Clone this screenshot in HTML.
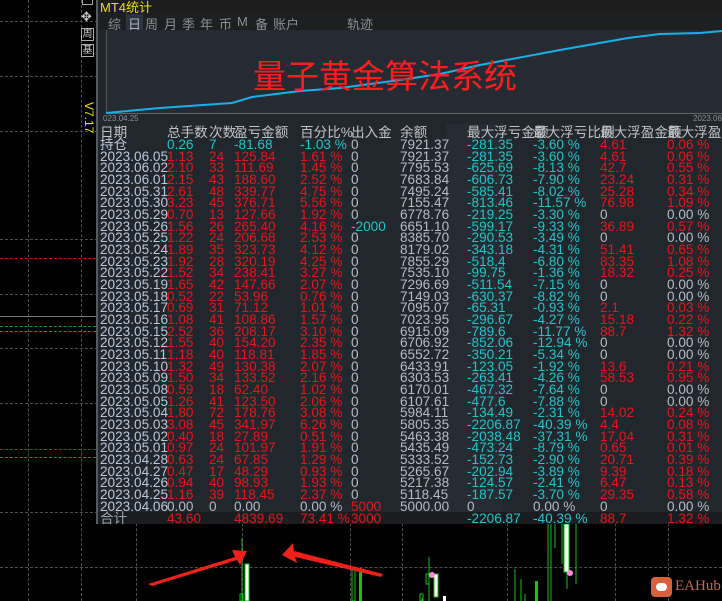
<!DOCTYPE html>
<html><head><meta charset="utf-8"><style>
*{margin:0;padding:0;box-sizing:border-box}
body{width:722px;height:601px;background:#000;position:relative;overflow:hidden;font-family:"Liberation Sans","Noto Sans CJK SC",sans-serif}
.a{position:absolute}
.hd{position:absolute;left:0;width:722px;border-top:1px dashed #4a4f57}
.vd{position:absolute;top:0;height:601px;border-left:1px dashed #4a4f57}
#panel{position:absolute;left:96px;top:0;width:626px;height:524px;background:#22262d;border-left:2px solid #555a62;border-bottom:1px solid #6a6f77}
.row{position:absolute;left:100px;height:12px;font-size:13.6px;line-height:12px;white-space:nowrap}
.row span{position:absolute;top:0}
.d{color:#b9c8dc;left:0}
.r{color:#e8161c}.c{color:#1ec6c8}.g{color:#b4bcc6}
.c1{left:67px}.c2{left:109px}.c3{left:134px}.c4{left:200px}.c5{left:251px}.c6{left:300px}.c7{left:367px}.c8{left:433px}.c9{left:500px}.c10{left:567px}
.tab{position:absolute;top:14px;font-size:13px;color:#8a9098}
</style></head><body>
<div class="hd" style="top:21px"></div><div class="hd" style="top:76px"></div><div class="hd" style="top:131px"></div>
<div class="hd" style="top:239px"></div><div class="hd" style="top:294px"></div><div class="hd" style="top:348px"></div>
<div class="hd" style="top:403px"></div><div class="hd" style="top:512px"></div><div class="hd" style="top:567px"></div>
<div class="vd" style="left:28px"></div><div class="vd" style="left:81px"></div><div class="vd" style="left:136px"></div>
<div class="vd" style="left:242px"></div><div class="vd" style="left:350px"></div><div class="vd" style="left:402px"></div>
<div class="vd" style="left:507px"></div><div class="vd" style="left:615px"></div><div class="vd" style="left:668px"></div>
<div class="a" style="left:0;top:258px;width:96px;border-top:1px dashed #d01010"></div>
<div class="a" style="left:0;top:316px;width:96px;border-top:1px solid #777"></div>
<div class="a" style="left:0;top:326px;width:96px;border-top:1px dashed #1a9a1a"></div>
<div class="a" style="left:0;top:331px;width:96px;border-top:1px dashed #1a9a1a"></div>
<div class="a" style="left:0;top:449px;width:96px;border-top:1px dashed #d01010"></div>
<div class="a" style="left:0;top:457px;width:96px;border-top:1px dashed #1a9a1a"></div>
<div class="a" style="left:82px;top:0;width:11px;height:5px;border:1px solid #aaa;border-top:none"></div>
<div class="a" style="left:81px;top:9px;color:#ccc;font-size:13px">✥</div>
<div class="a" style="left:81px;top:28px;width:13px;height:13px;border:1px solid #aaa;color:#ccc;font-size:10px;line-height:11px;text-align:center">周</div>
<div class="a" style="left:81px;top:44px;width:13px;height:13px;border:1px solid #aaa;color:#ccc;font-size:10px;line-height:11px;text-align:center">基</div>
<div class="a" style="top:102px;color:#e8e000;font-size:12px;transform:rotate(90deg);transform-origin:0 0;left:96px;white-space:nowrap">V7.17</div>
<div id="panel"></div>
<div class="a" style="left:98px;top:0;width:624px;height:13px;background:#1d1d1d"></div>
<div class="a" style="left:100px;top:-3px;color:#e8e000;font-size:13px">MT4统计</div>
<div class="a" style="left:98px;top:13px;width:624px;height:17px;background:#1e1f21"></div>
<span class="tab" style="left:108px">综</span>
<span class="tab" style="left:126px;color:#aab4c4;background:#2d3440;padding:0 2px">日</span>
<span class="tab" style="left:145px">周</span><span class="tab" style="left:164px">月</span><span class="tab" style="left:182px">季</span>
<span class="tab" style="left:200px">年</span><span class="tab" style="left:219px">币</span><span class="tab" style="left:237px">M</span>
<span class="tab" style="left:255px">备</span><span class="tab" style="left:273px">账户</span><span class="tab" style="left:347px">轨迹</span>
<div class="a" style="left:106px;top:30px;width:616px;height:84px;background:#262b33;border-left:1px solid #555;border-bottom:1px solid #666"></div>
<svg class="a" style="left:0;top:0" width="722" height="130">
<polyline fill="none" stroke="#19b0e8" stroke-width="2" points="106,113 160,108 232,103 252,97 300,91 340,88 400,80 440,74 480,65 560,50 628,38 660,34 700,33 722,31"/>
</svg>
<div class="a" style="left:103px;top:114px;font-size:8px;color:#8a9098">023.04.25</div>
<div class="a" style="left:693px;top:114px;font-size:8px;color:#8a9098">2023.06.</div>
<div class="a" style="left:253px;top:52px;font-size:33px;color:#ff1c1c;font-family:'Noto Sans CJK SC',sans-serif;line-height:44px">量子黄金算法系统</div>
<div class="a" style="left:446px;top:124px;width:56px;height:388px;background:#272c34"></div>
<div class="row" style="top:127px;color:#c0c4c8"><span class="d" style="color:#c0c4c8">日期</span><span class="c1">总手数</span><span class="c2">次数</span><span class="c3">盈亏金额</span><span class="c4">百分比%</span><span class="c5">出入金</span><span class="c6">余额</span><span class="c7">最大浮亏金额</span><span class="c8">最大浮亏比例</span><span class="c9">最大浮盈金额</span><span class="c10">最大浮盈比</span></div>
<div class="row" style="top:139px"><span class="d">持仓</span><span class="c1 c">0.26</span><span class="c2 c">7</span><span class="c3 c">-81.68</span><span class="c4 c">-1.03 %</span><span class="c5 g">0</span><span class="c6 g">7921.37</span><span class="c7 c">-281.35</span><span class="c8 c">-3.60 %</span><span class="c9 r">4.61</span><span class="c10 r">0.06 %</span></div>
<div class="row" style="top:151px"><span class="d">2023.06.05</span><span class="c1 r">1.13</span><span class="c2 r">24</span><span class="c3 r">125.84</span><span class="c4 r">1.61 %</span><span class="c5 g">0</span><span class="c6 g">7921.37</span><span class="c7 c">-281.35</span><span class="c8 c">-3.60 %</span><span class="c9 r">4.61</span><span class="c10 r">0.06 %</span></div>
<div class="row" style="top:162px"><span class="d">2023.06.02</span><span class="c1 r">2.10</span><span class="c2 r">33</span><span class="c3 r">111.69</span><span class="c4 r">1.45 %</span><span class="c5 g">0</span><span class="c6 g">7795.53</span><span class="c7 c">-625.69</span><span class="c8 c">-8.13 %</span><span class="c9 r">42.7</span><span class="c10 r">0.55 %</span></div>
<div class="row" style="top:174px"><span class="d">2023.06.01</span><span class="c1 r">2.15</span><span class="c2 r">43</span><span class="c3 r">188.60</span><span class="c4 r">2.52 %</span><span class="c5 g">0</span><span class="c6 g">7683.84</span><span class="c7 c">-606.73</span><span class="c8 c">-7.90 %</span><span class="c9 r">23.24</span><span class="c10 r">0.31 %</span></div>
<div class="row" style="top:186px"><span class="d">2023.05.31</span><span class="c1 r">2.61</span><span class="c2 r">48</span><span class="c3 r">339.77</span><span class="c4 r">4.75 %</span><span class="c5 g">0</span><span class="c6 g">7495.24</span><span class="c7 c">-585.41</span><span class="c8 c">-8.02 %</span><span class="c9 r">25.28</span><span class="c10 r">0.34 %</span></div>
<div class="row" style="top:197px"><span class="d">2023.05.30</span><span class="c1 r">3.23</span><span class="c2 r">45</span><span class="c3 r">376.71</span><span class="c4 r">5.56 %</span><span class="c5 g">0</span><span class="c6 g">7155.47</span><span class="c7 c">-813.46</span><span class="c8 c">-11.57 %</span><span class="c9 r">76.98</span><span class="c10 r">1.09 %</span></div>
<div class="row" style="top:209px"><span class="d">2023.05.29</span><span class="c1 r">0.70</span><span class="c2 r">13</span><span class="c3 r">127.66</span><span class="c4 r">1.92 %</span><span class="c5 g">0</span><span class="c6 g">6778.76</span><span class="c7 c">-219.25</span><span class="c8 c">-3.30 %</span><span class="c9 g">0</span><span class="c10 g">0.00 %</span></div>
<div class="row" style="top:221px"><span class="d">2023.05.26</span><span class="c1 r">1.56</span><span class="c2 r">26</span><span class="c3 r">265.40</span><span class="c4 r">4.16 %</span><span class="c5 c">-2000</span><span class="c6 g">6651.10</span><span class="c7 c">-599.17</span><span class="c8 c">-9.33 %</span><span class="c9 r">36.89</span><span class="c10 r">0.57 %</span></div>
<div class="row" style="top:232px"><span class="d">2023.05.25</span><span class="c1 r">1.22</span><span class="c2 r">24</span><span class="c3 r">206.68</span><span class="c4 r">2.53 %</span><span class="c5 g">0</span><span class="c6 g">8385.70</span><span class="c7 c">-290.53</span><span class="c8 c">-3.49 %</span><span class="c9 g">0</span><span class="c10 g">0.00 %</span></div>
<div class="row" style="top:244px"><span class="d">2023.05.24</span><span class="c1 r">1.89</span><span class="c2 r">35</span><span class="c3 r">323.73</span><span class="c4 r">4.12 %</span><span class="c5 g">0</span><span class="c6 g">8179.02</span><span class="c7 c">-343.18</span><span class="c8 c">-4.31 %</span><span class="c9 r">51.41</span><span class="c10 r">0.65 %</span></div>
<div class="row" style="top:256px"><span class="d">2023.05.23</span><span class="c1 r">1.92</span><span class="c2 r">28</span><span class="c3 r">320.19</span><span class="c4 r">4.25 %</span><span class="c5 g">0</span><span class="c6 g">7855.29</span><span class="c7 c">-518.4</span><span class="c8 c">-6.80 %</span><span class="c9 r">83.35</span><span class="c10 r">1.08 %</span></div>
<div class="row" style="top:267px"><span class="d">2023.05.22</span><span class="c1 r">1.52</span><span class="c2 r">34</span><span class="c3 r">238.41</span><span class="c4 r">3.27 %</span><span class="c5 g">0</span><span class="c6 g">7535.10</span><span class="c7 c">-99.75</span><span class="c8 c">-1.36 %</span><span class="c9 r">18.32</span><span class="c10 r">0.25 %</span></div>
<div class="row" style="top:279px"><span class="d">2023.05.19</span><span class="c1 r">1.65</span><span class="c2 r">42</span><span class="c3 r">147.66</span><span class="c4 r">2.07 %</span><span class="c5 g">0</span><span class="c6 g">7296.69</span><span class="c7 c">-511.54</span><span class="c8 c">-7.15 %</span><span class="c9 g">0</span><span class="c10 g">0.00 %</span></div>
<div class="row" style="top:291px"><span class="d">2023.05.18</span><span class="c1 r">0.52</span><span class="c2 r">22</span><span class="c3 r">53.96</span><span class="c4 r">0.76 %</span><span class="c5 g">0</span><span class="c6 g">7149.03</span><span class="c7 c">-630.37</span><span class="c8 c">-8.82 %</span><span class="c9 g">0</span><span class="c10 g">0.00 %</span></div>
<div class="row" style="top:302px"><span class="d">2023.05.17</span><span class="c1 r">0.69</span><span class="c2 r">31</span><span class="c3 r">71.12</span><span class="c4 r">1.01 %</span><span class="c5 g">0</span><span class="c6 g">7095.07</span><span class="c7 c">-65.31</span><span class="c8 c">-0.93 %</span><span class="c9 r">2.1</span><span class="c10 r">0.03 %</span></div>
<div class="row" style="top:314px"><span class="d">2023.05.16</span><span class="c1 r">1.08</span><span class="c2 r">41</span><span class="c3 r">108.86</span><span class="c4 r">1.57 %</span><span class="c5 g">0</span><span class="c6 g">7023.95</span><span class="c7 c">-296.67</span><span class="c8 c">-4.27 %</span><span class="c9 r">15.18</span><span class="c10 r">0.22 %</span></div>
<div class="row" style="top:326px"><span class="d">2023.05.15</span><span class="c1 r">2.52</span><span class="c2 r">36</span><span class="c3 r">208.17</span><span class="c4 r">3.10 %</span><span class="c5 g">0</span><span class="c6 g">6915.09</span><span class="c7 c">-789.6</span><span class="c8 c">-11.77 %</span><span class="c9 r">88.7</span><span class="c10 r">1.32 %</span></div>
<div class="row" style="top:337px"><span class="d">2023.05.12</span><span class="c1 r">1.55</span><span class="c2 r">40</span><span class="c3 r">154.20</span><span class="c4 r">2.35 %</span><span class="c5 g">0</span><span class="c6 g">6706.92</span><span class="c7 c">-852.06</span><span class="c8 c">-12.94 %</span><span class="c9 g">0</span><span class="c10 g">0.00 %</span></div>
<div class="row" style="top:349px"><span class="d">2023.05.11</span><span class="c1 r">1.18</span><span class="c2 r">40</span><span class="c3 r">118.81</span><span class="c4 r">1.85 %</span><span class="c5 g">0</span><span class="c6 g">6552.72</span><span class="c7 c">-350.21</span><span class="c8 c">-5.34 %</span><span class="c9 g">0</span><span class="c10 g">0.00 %</span></div>
<div class="row" style="top:361px"><span class="d">2023.05.10</span><span class="c1 r">1.32</span><span class="c2 r">49</span><span class="c3 r">130.38</span><span class="c4 r">2.07 %</span><span class="c5 g">0</span><span class="c6 g">6433.91</span><span class="c7 c">-123.05</span><span class="c8 c">-1.92 %</span><span class="c9 r">13.6</span><span class="c10 r">0.21 %</span></div>
<div class="row" style="top:372px"><span class="d">2023.05.09</span><span class="c1 r">1.50</span><span class="c2 r">34</span><span class="c3 r">133.52</span><span class="c4 r">2.16 %</span><span class="c5 g">0</span><span class="c6 g">6303.53</span><span class="c7 c">-263.41</span><span class="c8 c">-4.26 %</span><span class="c9 r">58.53</span><span class="c10 r">0.95 %</span></div>
<div class="row" style="top:384px"><span class="d">2023.05.08</span><span class="c1 r">0.59</span><span class="c2 r">18</span><span class="c3 r">62.40</span><span class="c4 r">1.02 %</span><span class="c5 g">0</span><span class="c6 g">6170.01</span><span class="c7 c">-467.32</span><span class="c8 c">-7.64 %</span><span class="c9 g">0</span><span class="c10 g">0.00 %</span></div>
<div class="row" style="top:396px"><span class="d">2023.05.05</span><span class="c1 r">1.26</span><span class="c2 r">41</span><span class="c3 r">123.50</span><span class="c4 r">2.06 %</span><span class="c5 g">0</span><span class="c6 g">6107.61</span><span class="c7 c">-477.6</span><span class="c8 c">-7.88 %</span><span class="c9 g">0</span><span class="c10 g">0.00 %</span></div>
<div class="row" style="top:407px"><span class="d">2023.05.04</span><span class="c1 r">1.80</span><span class="c2 r">72</span><span class="c3 r">178.76</span><span class="c4 r">3.08 %</span><span class="c5 g">0</span><span class="c6 g">5984.11</span><span class="c7 c">-134.49</span><span class="c8 c">-2.31 %</span><span class="c9 r">14.02</span><span class="c10 r">0.24 %</span></div>
<div class="row" style="top:419px"><span class="d">2023.05.03</span><span class="c1 r">3.08</span><span class="c2 r">45</span><span class="c3 r">341.97</span><span class="c4 r">6.26 %</span><span class="c5 g">0</span><span class="c6 g">5805.35</span><span class="c7 c">-2206.87</span><span class="c8 c">-40.39 %</span><span class="c9 r">4.4</span><span class="c10 r">0.08 %</span></div>
<div class="row" style="top:431px"><span class="d">2023.05.02</span><span class="c1 r">0.40</span><span class="c2 r">18</span><span class="c3 r">27.89</span><span class="c4 r">0.51 %</span><span class="c5 g">0</span><span class="c6 g">5463.38</span><span class="c7 c">-2038.48</span><span class="c8 c">-37.31 %</span><span class="c9 r">17.04</span><span class="c10 r">0.31 %</span></div>
<div class="row" style="top:442px"><span class="d">2023.05.01</span><span class="c1 r">0.97</span><span class="c2 r">24</span><span class="c3 r">101.97</span><span class="c4 r">1.91 %</span><span class="c5 g">0</span><span class="c6 g">5435.49</span><span class="c7 c">-473.24</span><span class="c8 c">-8.79 %</span><span class="c9 r">0.65</span><span class="c10 r">0.01 %</span></div>
<div class="row" style="top:454px"><span class="d">2023.04.28</span><span class="c1 r">0.63</span><span class="c2 r">24</span><span class="c3 r">67.85</span><span class="c4 r">1.29 %</span><span class="c5 g">0</span><span class="c6 g">5333.52</span><span class="c7 c">-152.73</span><span class="c8 c">-2.90 %</span><span class="c9 r">20.71</span><span class="c10 r">0.39 %</span></div>
<div class="row" style="top:466px"><span class="d">2023.04.27</span><span class="c1 r">0.47</span><span class="c2 r">17</span><span class="c3 r">48.29</span><span class="c4 r">0.93 %</span><span class="c5 g">0</span><span class="c6 g">5265.67</span><span class="c7 c">-202.94</span><span class="c8 c">-3.89 %</span><span class="c9 r">9.39</span><span class="c10 r">0.18 %</span></div>
<div class="row" style="top:477px"><span class="d">2023.04.26</span><span class="c1 r">0.94</span><span class="c2 r">40</span><span class="c3 r">98.93</span><span class="c4 r">1.93 %</span><span class="c5 g">0</span><span class="c6 g">5217.38</span><span class="c7 c">-124.57</span><span class="c8 c">-2.41 %</span><span class="c9 r">6.47</span><span class="c10 r">0.13 %</span></div>
<div class="row" style="top:489px"><span class="d">2023.04.25</span><span class="c1 r">1.16</span><span class="c2 r">39</span><span class="c3 r">118.45</span><span class="c4 r">2.37 %</span><span class="c5 g">0</span><span class="c6 g">5118.45</span><span class="c7 c">-187.57</span><span class="c8 c">-3.70 %</span><span class="c9 r">29.35</span><span class="c10 r">0.58 %</span></div>
<div class="row" style="top:501px"><span class="d">2023.04.06</span><span class="c1 g">0.00</span><span class="c2 g">0</span><span class="c3 g">0.00</span><span class="c4 g">0.00 %</span><span class="c5 r">5000</span><span class="c6 g">5000.00</span><span class="c7 g">0</span><span class="c8 g">0.00 %</span><span class="c9 g">0</span><span class="c10 g">0.00 %</span></div>
<div class="a" style="left:98px;top:512px;width:624px;height:12px;background:#1a1c1f"></div>
<div class="row" style="top:513px"><span class="d" style="color:#9aa4b0">合计</span><span class="c1 r">43.60</span><span class="c3 r">4839.69</span><span class="c4 r">73.41 %</span><span class="c5 r">3000</span><span class="c7 c">-2206.87</span><span class="c8 c">-40.39 %</span><span class="c9 r">88.7</span><span class="c10 r">1.32 %</span></div>
<svg class="a" style="left:0;top:524px" width="722" height="77">
<g stroke="#18c018" fill="none" stroke-width="1">
<line x1="242" y1="14" x2="242" y2="77"/><line x1="248" y1="55" x2="248" y2="77"/><rect x="240" y="70" width="3" height="7"/>
<line x1="429" y1="33" x2="429" y2="77"/><line x1="422" y1="74" x2="422" y2="77"/><rect x="426" y="50" width="3" height="10"/>
<rect x="420" y="70" width="3" height="7"/>
<line x1="548" y1="0" x2="548" y2="77"/><line x1="551" y1="0" x2="551" y2="77"/><line x1="555" y1="0" x2="555" y2="24"/>
<line x1="562" y1="0" x2="562" y2="40"/><line x1="567" y1="0" x2="567" y2="65"/><line x1="576" y1="0" x2="576" y2="60"/>
<line x1="515" y1="45" x2="515" y2="77"/><line x1="521" y1="55" x2="521" y2="77"/><line x1="525" y1="70" x2="525" y2="77"/>
</g>
<rect x="359" y="44" width="3" height="33" fill="#18c018"/>
<rect x="352" y="44" width="3" height="33" fill="none" stroke="#18c018"/>
<rect x="434" y="50" width="4" height="23" fill="#fff" stroke="#18c018"/>
<rect x="443" y="72" width="3" height="5" fill="#fff"/>
<rect x="564" y="0" width="5" height="48" fill="#fff" stroke="#18c018"/>
<rect x="535" y="57" width="3" height="20" fill="#18c018"/>
<rect x="245" y="40" width="4" height="37" fill="#fff" stroke="#18c018"/>
<circle cx="570" cy="49" r="3" fill="#ff8ad8"/><circle cx="432" cy="51" r="3" fill="#ff8ad8"/>
<polygon points="148,60 235,33 232,26 247,27 240,41 237,36 152,62" fill="#f0201a"/>
<polygon points="381,53 295,33 297,39 282,31 293,19 294,27 383,50" fill="#f0201a"/>
</svg>
<div class="a" style="left:651px;top:577px;width:21px;height:20px;background:#d8603c;border-radius:4px"></div>
<div class="a" style="left:656px;top:583px;width:11px;height:8px;background:#fff;border-radius:4px"></div>
<div class="a" style="left:675px;top:578px;font-family:'Liberation Serif',serif;font-size:15px;color:#c06850">EAHub</div>
</body></html>
